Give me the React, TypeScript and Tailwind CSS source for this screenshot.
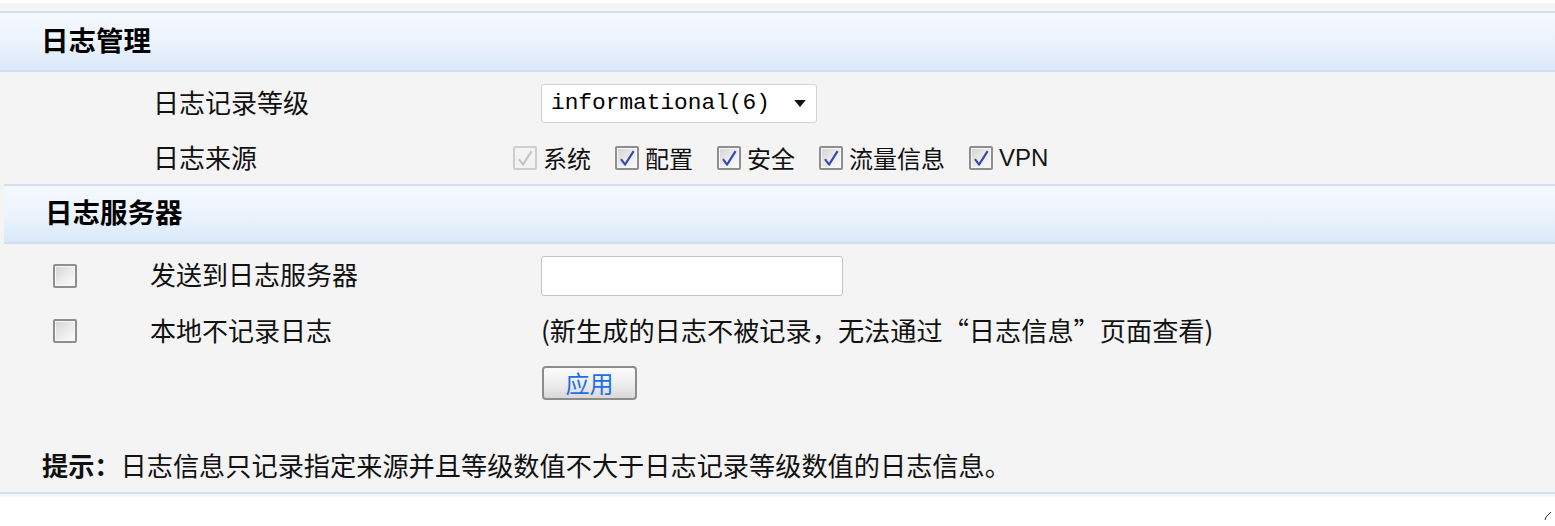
import React from 'react';

function Box({ checked, disabled }: { checked?: boolean; disabled?: boolean }) {
  return (
    <span
      className={`flex h-[24px] w-[24px] shrink-0 items-center justify-center rounded-[2px] border-2 ${
        disabled
          ? 'border-[#cdcdcd] bg-[#f3f3f3]'
          : 'border-[#8e8e8e] bg-gradient-to-br from-[#d2d2d2] via-[#ebebeb] to-[#fbfbfb] shadow-[inset_0_0_0_1px_#f7f7f7]'
      }`}
    >
      {checked && (
        <svg viewBox="0 0 12 12" className="h-[18px] w-[18px]">
          <path
            d="M2 6.8 L4.7 10.4 L10.4 1.4"
            fill="none"
            stroke={disabled ? '#c4c4c4' : '#3446b4'}
            strokeWidth="1.4"
            strokeLinejoin="round"
          />
        </svg>
      )}
    </span>
  );
}

function Header({ title, className = '' }: { title: string; className?: string }) {
  return (
    <div
      className={`flex items-center border-y-2 border-[#cfe0f3] bg-gradient-to-b from-[#f5f9fe] via-[#ecf3fc] to-[#dae9f9] pl-[41px] ${className}`}
    >
      <h2 className="text-[27.5px] font-bold leading-none text-black">{title}</h2>
    </div>
  );
}

const sources = [
  { name: '系统', checked: true, disabled: true },
  { name: '配置', checked: true },
  { name: '安全', checked: true },
  { name: '流量信息', checked: true },
  { name: 'VPN', checked: true },
];

export default function App() {
  return (
    <div className="relative h-[526px] w-full overflow-hidden bg-white font-['Liberation_Sans','Noto_Sans_CJK_SC',sans-serif] text-[#111]">
      <div className="mt-[3px] bg-[#f4f4f4] pt-[8px]">
        <Header title="日志管理" className="h-[61px]" />

        {/* 日志记录等级 */}
        <div className="mt-[11px] flex h-[40px] items-center pl-[153px]">
          <span className="w-[388px] -translate-y-[2px] font-['Noto_Sans_CJK_SC',sans-serif] text-[26px]">日志记录等级</span>
          <div className="flex h-[39px] w-[276px] items-center justify-between rounded-[3px] border border-[#d2d2d2] bg-white pl-[9px] pr-[10px]">
            <span className="font-['Liberation_Mono',monospace] text-[22.8px] text-black">informational(6)</span>
            <svg viewBox="0 0 10 6" className="h-[7px] w-[12px]">
              <path d="M0 0 L10 0 L5 6 Z" fill="#111" />
            </svg>
          </div>
        </div>

        {/* 日志来源 */}
        <div className="mt-[23px] flex h-[24px] items-center pl-[153px]">
          <span className="w-[360px] -translate-y-[2px] font-['Noto_Sans_CJK_SC',sans-serif] text-[26px]">日志来源</span>
          <div className="flex items-center gap-[24px]">
            {sources.map((s) => (
              <label key={s.name} className="flex items-center gap-[6px]">
                <Box checked={s.checked} disabled={s.disabled} />
                <span className={s.name === 'VPN' ? 'text-[24px] text-[#151515]' : 'font-[\'Noto_Sans_CJK_SC\',sans-serif] text-[24px]'}>
                  {s.name}
                </span>
              </label>
            ))}
          </div>
        </div>

        <Header title="日志服务器" className="ml-[4px] mt-[14px] h-[60px]" />

        {/* 发送到日志服务器 */}
        <div className="mt-[12px] flex h-[40px] items-center pl-[53px]">
          <Box />
          <span className="ml-[73px] w-[391px] -translate-y-[3px] font-['Noto_Sans_CJK_SC',sans-serif] text-[26px]">发送到日志服务器</span>
          <div className="h-[40px] w-[302px] rounded-[3px] border border-[#c4c4c4] bg-white" />
        </div>

        {/* 本地不记录日志 */}
        <div className="mt-[15px] flex h-[40px] items-center pl-[53px]">
          <Box />
          <span className="ml-[73px] w-[391px] -translate-y-[2px] font-['Noto_Sans_CJK_SC',sans-serif] text-[26px]">本地不记录日志</span>
          <span className="font-['Noto_Sans_CJK_SC',sans-serif] text-[26.2px]">(新生成的日志不被记录，无法通过“日志信息”页面查看)</span>
        </div>

        <div className="mt-[15px] pl-[542px]">
          <button className="flex h-[34px] w-[95px] items-center justify-center rounded-[4px] border-2 border-[#8c8c8c] bg-gradient-to-b from-[#fbfbfb] via-[#eeeeee] to-[#d9d9d9] font-['Noto_Sans_CJK_SC',sans-serif] text-[24px] leading-none text-[#1c6fe6]">
            应用
          </button>
        </div>

        <p className="mt-[48px] flex h-[36px] items-center pl-[42px] font-['Noto_Sans_CJK_SC',sans-serif] text-[26.2px]">
          <strong className="font-bold">提示：</strong>
          日志信息只记录指定来源并且等级数值不大于日志记录等级数值的日志信息。
        </p>

        <div className="mt-[8px] h-[2px] bg-[#d3e2f1]" />
        <div className="h-[3px]" />
      </div>

      <div className="flex justify-end pr-[3px] pt-[14px]">
        <svg viewBox="0 0 8 10" className="h-[10px] w-[8px]">
          <path d="M1 9 L2 6 L7 1" fill="none" stroke="#333" strokeWidth="1" />
        </svg>
      </div>
    </div>
  );
}
